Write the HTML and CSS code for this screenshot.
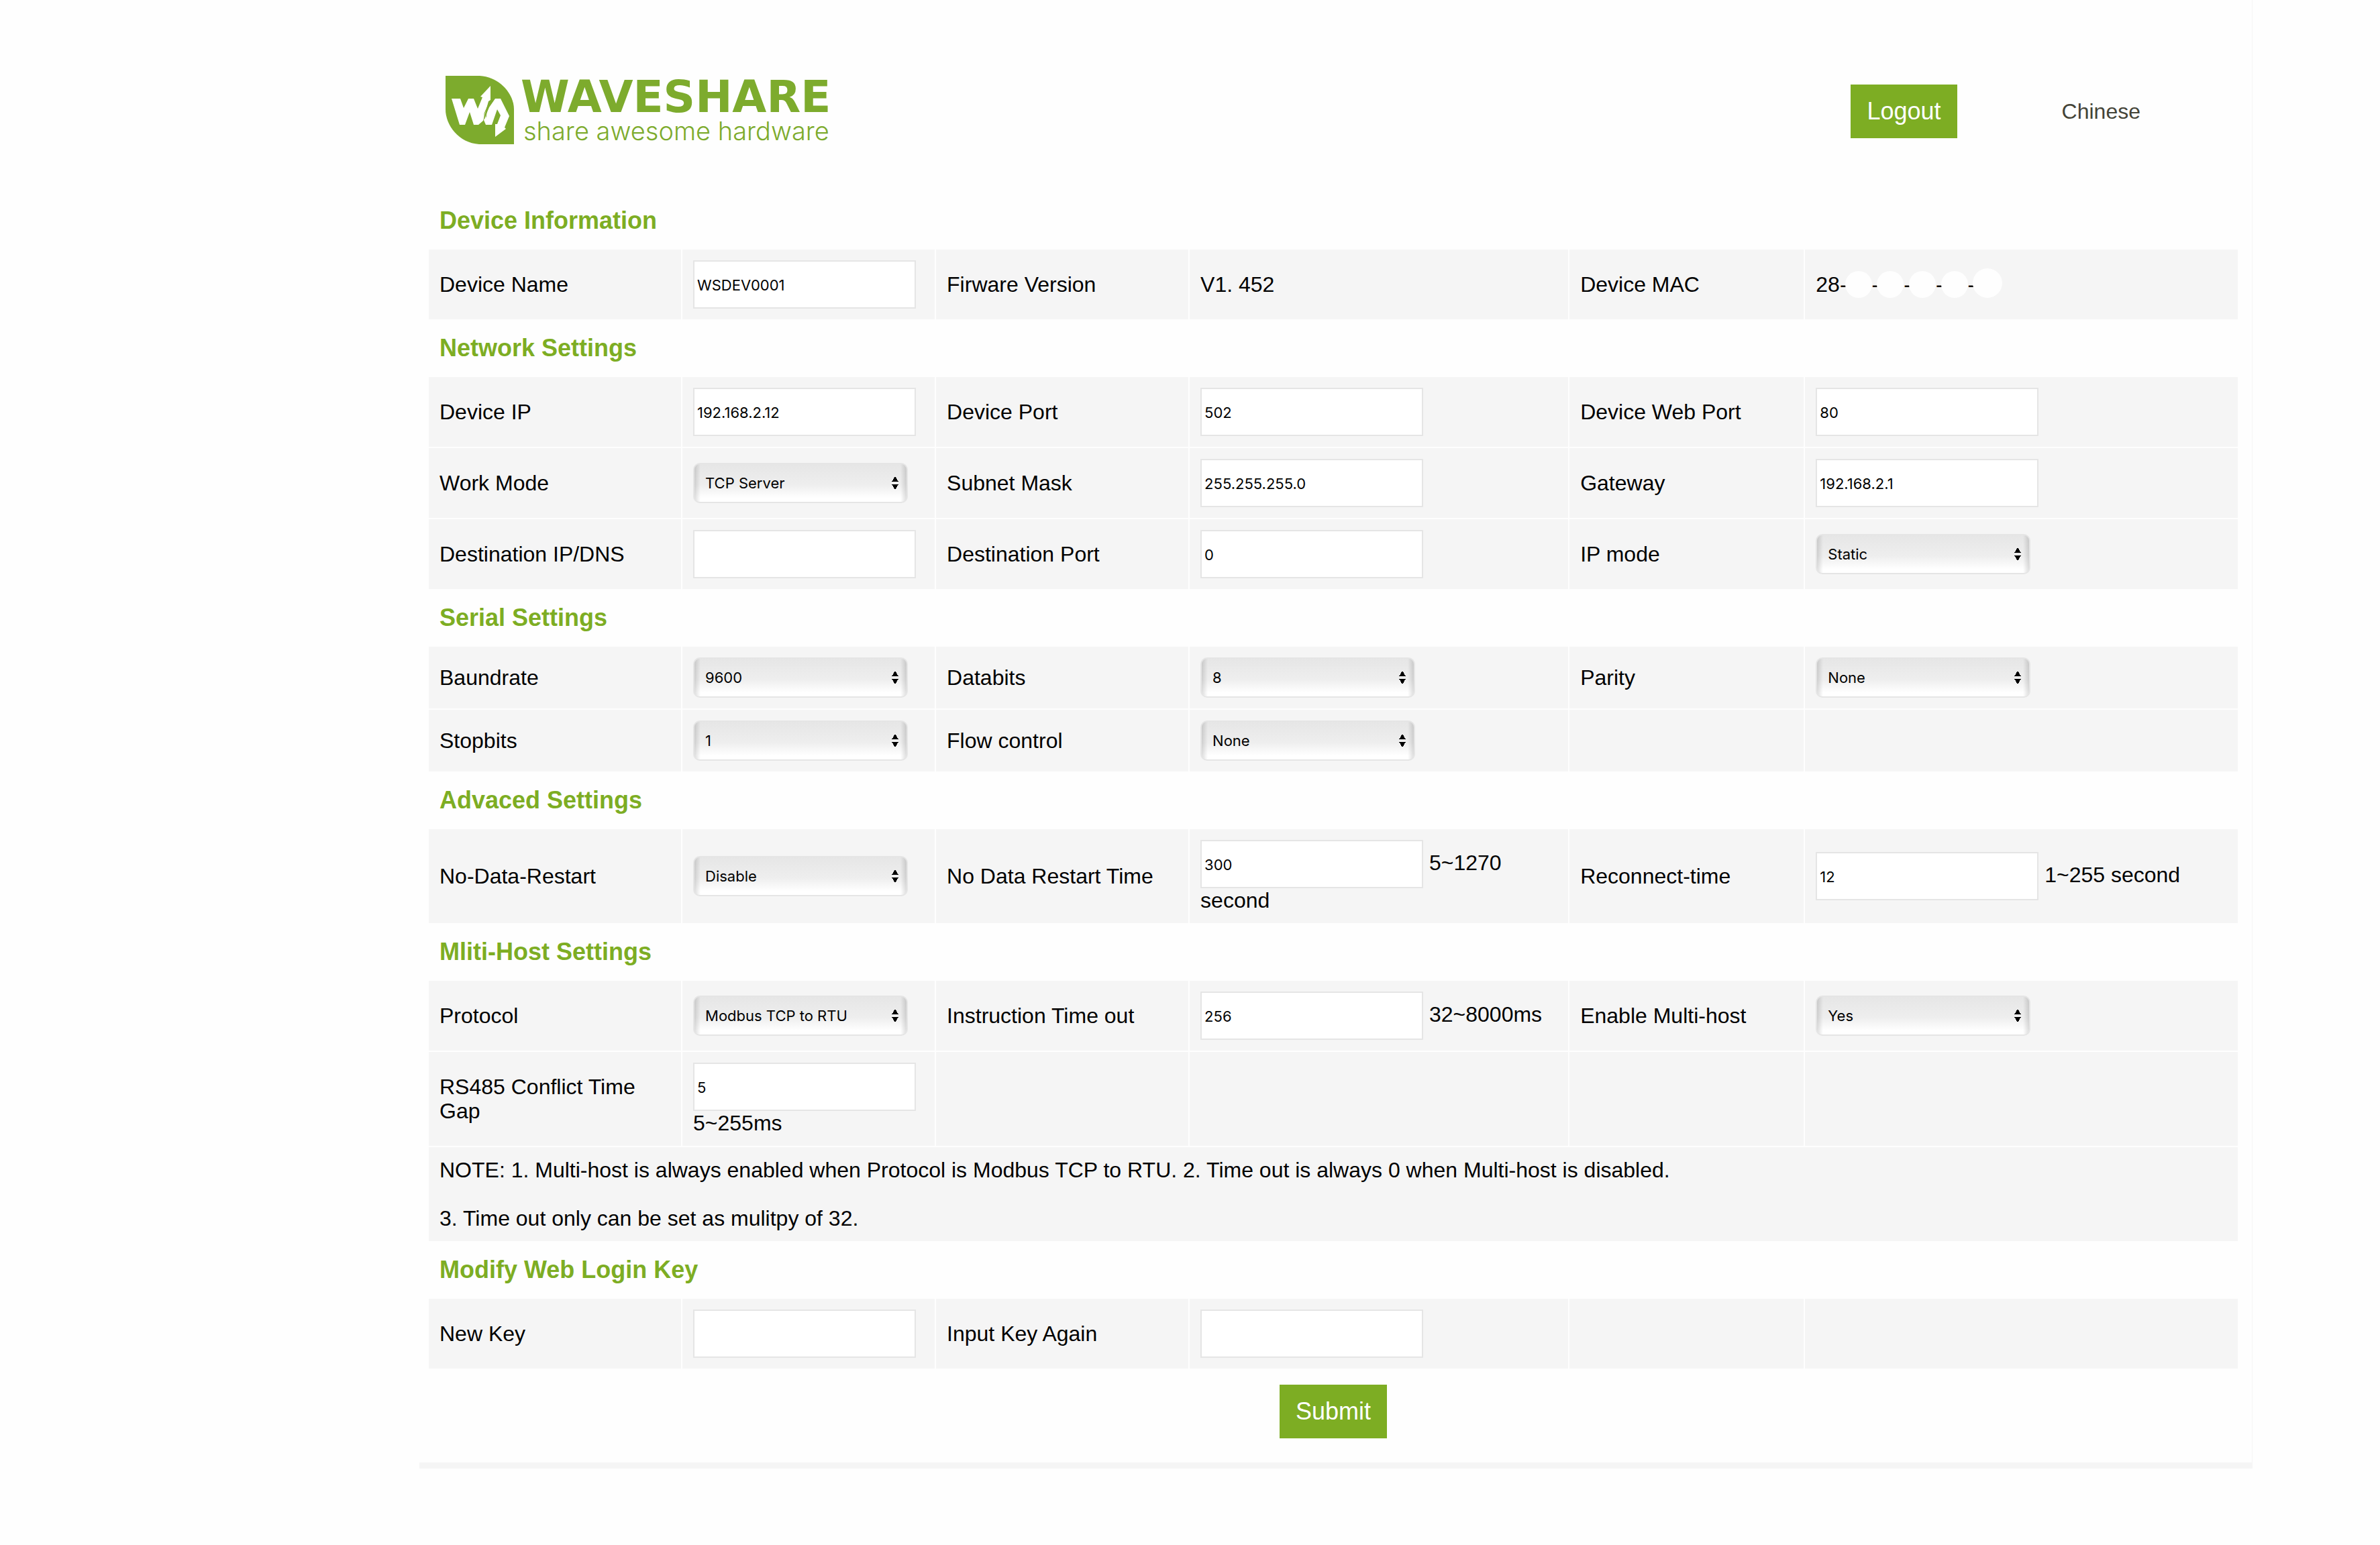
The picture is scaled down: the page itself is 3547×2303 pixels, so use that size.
FILE: index.html
```html
<!DOCTYPE html>
<html lang="en">
<head>
<meta charset="utf-8">
<title>Waveshare device settings</title>
<link rel="stylesheet" href="styles.css">
</head>
<body>
<main class="page">
  <header class="header">
    <div class="logo">
      <svg class="emblem" viewBox="0 0 102 102" aria-hidden="true">
        <path fill="#7dab2d" d="M0 0H51C82 2 102 28 102 50V102H50C20 100 0 74 0 50Z"/>
        <path fill="#fff" d="M9 34H22L27 48 34 34H42L48 49 55 32 52 31 67 15V36L64 38 56 67 49 73H42L36 54 29 73H21Z"/>
        <path fill="#fff" d="M74 34H82L95 60 88 77 90 79 74 91V72L77 72 82 59 77 50 69 73H60L57 66 65 47Z"/>
        <path fill="none" stroke="#7dab2d" stroke-width="1" d="M65 40L58 56V64M62 48L60 62"/>
      </svg>
      <div class="wordmark">
        <span class="brand">WAVESHARE</span>
        <span class="tagline">share awesome hardware</span>
      </div>
    </div>
    <nav class="actions">
      <button class="btn" type="button">Logout</button>
      <a class="lang" href="#">Chinese</a>
    </nav>
  </header>

  <form class="form">
    <table class="settings">
      <colgroup><col class="c14"><col class="c14"><col class="c14"><col class="c21"><col class="c13"><col class="c24"></colgroup>
      <tbody>
      <tr><th colspan="6">Device Information</th></tr>
      <tr>
        <td><label for="name">Device Name</label></td><td><input id="name" type="text" value="WSDEV0001"></td>
        <td>Firware Version</td><td>V1. 452</td>
        <td>Device MAC</td><td>28-<i class="dot"></i>-<i class="dot"></i>-<i class="dot"></i>-<i class="dot"></i>-<i class="dot dot-large"></i></td>
      </tr>
      <tr><th colspan="6">Network Settings</th></tr>
      <tr>
        <td><label for="ip">Device IP</label></td><td><input id="ip" type="text" value="192.168.2.12"></td>
        <td><label for="port">Device Port</label></td><td><input id="port" type="text" value="502"></td>
        <td><label for="webport">Device Web Port</label></td><td><input id="webport" type="text" value="80"></td>
      </tr>
      <tr>
        <td><label for="mode">Work Mode</label></td><td><select id="mode"><option>TCP Server</option></select></td>
        <td><label for="mask">Subnet Mask</label></td><td><input id="mask" type="text" value="255.255.255.0"></td>
        <td><label for="gateway">Gateway</label></td><td><input id="gateway" type="text" value="192.168.2.1"></td>
      </tr>
      <tr>
        <td><label for="dest">Destination IP/DNS</label></td><td><input id="dest" type="text"></td>
        <td><label for="destport">Destination Port</label></td><td><input id="destport" type="text" value="0"></td>
        <td><label for="ipmode">IP mode</label></td><td><select id="ipmode"><option>Static</option></select></td>
      </tr>
      <tr><th colspan="6">Serial Settings</th></tr>
      <tr>
        <td><label for="baud">Baundrate</label></td><td><select id="baud"><option>9600</option></select></td>
        <td><label for="databits">Databits</label></td><td><select id="databits"><option>8</option></select></td>
        <td><label for="parity">Parity</label></td><td><select id="parity"><option>None</option></select></td>
      </tr>
      <tr>
        <td><label for="stopbits">Stopbits</label></td><td><select id="stopbits"><option>1</option></select></td>
        <td><label for="flow">Flow control</label></td><td><select id="flow"><option>None</option></select></td>
        <td></td><td></td>
      </tr>
      <tr><th colspan="6">Advaced Settings</th></tr>
      <tr>
        <td><label for="restart">No-Data-Restart</label></td><td><select id="restart"><option>Disable</option></select></td>
        <td><label for="restarttime">No Data Restart Time</label></td><td><input id="restarttime" type="text" value="300"> 5~1270 second</td>
        <td><label for="reconnect">Reconnect-time</label></td><td><input id="reconnect" type="text" value="12"> 1~255 second</td>
      </tr>
      <tr><th colspan="6">Mliti-Host Settings</th></tr>
      <tr>
        <td><label for="protocol">Protocol</label></td><td><select id="protocol"><option>Modbus TCP to RTU</option></select></td>
        <td><label for="timeout">Instruction Time out</label></td><td><input id="timeout" type="text" value="256"> 32~8000ms</td>
        <td><label for="multihost">Enable Multi-host</label></td><td><select id="multihost"><option>Yes</option></select></td>
      </tr>
      <tr>
        <td><label for="gap">RS485 Conflict Time Gap</label></td><td><input id="gap" type="text" value="5"> 5~255ms</td>
        <td></td><td></td><td></td><td></td>
      </tr>
      <tr><td colspan="6">NOTE: 1. Multi-host is always enabled when Protocol is Modbus TCP to RTU. 2. Time out is always 0 when Multi-host is disabled.<br><br>3. Time out only can be set as mulitpy of 32.</td></tr>
      <tr><th colspan="6">Modify Web Login Key</th></tr>
      <tr>
        <td><label for="key">New Key</label></td><td><input id="key" type="password"></td>
        <td><label for="key2">Input Key Again</label></td><td><input id="key2" type="password"></td>
        <td></td><td></td>
      </tr>
      </tbody>
    </table>
    <div class="submit-row"><button class="btn" type="button">Submit</button></div>
  </form>
</main>
</body>
</html>
```

FILE: styles.css
```css
* { box-sizing: border-box; }

body {
  margin: 0;
  padding: 0 190px 0 625px;
  background: #fefefe;
  color: #000;
  font: 32px/36px "Liberation Sans", Arial, sans-serif;
}

.page {
  border-right: 1px solid #f5f5f5;
  border-bottom: 9px solid #f5f5f5;
}

/* Header */
.header {
  display: flex;
  justify-content: space-between;
  align-items: flex-start;
  padding: 113px 166px 71px 39px;
}

.logo {
  display: flex;
  gap: 10px;
}

.emblem { width: 102px; height: 102px; }

.wordmark {
  display: flex;
  flex-direction: column;
  color: #7dab2d;
  white-space: nowrap;
}

.brand { font: bold 66px/64px "DejaVu Sans", sans-serif; }

.tagline {
  padding-left: 4px;
  font: 300 38px/36px Inter, sans-serif;
}

.actions {
  display: flex;
  align-items: center;
  gap: 156px;
  padding-top: 13px;
}

.lang {
  color: #444438;
  text-decoration: none;
}

.btn {
  height: 80px;
  padding: 0 24px;
  border: 0;
  background: #7dad23;
  color: #fff;
  font: 36px/40px "Liberation Sans", Arial, sans-serif;
}

/* Settings */
.form { padding: 0 19px 36px 12px; }

.settings {
  width: 100%;
  table-layout: fixed;
  border-collapse: separate;
  border-spacing: 2px;
}

.c13 { width: 13%; }
.c14 { width: 14%; }
.c21 { width: 21%; }
.c24 { width: 24%; }

.settings th {
  height: 82px;
  padding: 0 16px;
  color: #7dad23;
  font-size: 36px;
  line-height: 40px;
  text-align: left;
}

.settings td {
  padding: 16px;
  background: #f5f5f5;
  vertical-align: middle;
}

input,
select {
  border: 2px solid #e5e5e5;
  color: #000;
  font: 22px/28px Inter, sans-serif;
}

input {
  width: 332px;
  max-width: 100%;
  height: 72px;
  margin: 0;
  padding: 2px 4px 0;
  background: #fff;
}

/* Up and down arrows, shaded sides, then the vertical sheen */
select {
  appearance: none;
  display: block;
  width: 320px;
  height: 60px;
  margin: 0;
  padding: 0 16px;
  border-radius: 10px;
  background:
    conic-gradient(from 148deg at 50% 0, #000 64deg, transparent 0) right 12px top 18px / 10px 8px no-repeat,
    conic-gradient(from -32deg at 50% 100%, #000 64deg, transparent 0) right 12px top 30px / 10px 8px no-repeat,
    linear-gradient(90deg, #0002, transparent 9px calc(100% - 9px), #0002),
    linear-gradient(#e6e6e6, #eee 55%, #fff 90%);
}

/* Blanked-out groups of the MAC address */
.dot {
  display: inline-block;
  width: 40px;
  height: 40px;
  margin: -8px 0 -8px -3px;
  border-radius: 50%;
  background: #fefefe;
  vertical-align: -1px;
}

.dot-large { width: 44px; height: 44px; }

.submit-row {
  display: flex;
  justify-content: center;
  padding-top: 22px;
}
```
